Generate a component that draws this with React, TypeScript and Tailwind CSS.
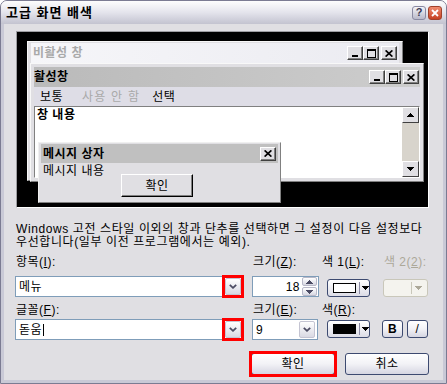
import type { ReactNode } from 'react'

type CapKind = 'min' | 'max' | 'close'

function CapGlyph({ kind }: { kind: CapKind }) {
  if (kind === 'min')
    return (
      <svg width="8" height="8" viewBox="0 0 8 8" shapeRendering="crispEdges">
        <rect x="1" y="6" width="6" height="2" fill="#000" />
      </svg>
    )
  if (kind === 'max')
    return (
      <svg width="9" height="9" viewBox="0 0 9 9" shapeRendering="crispEdges">
        <path d="M0 0h9v9H0z M1 2v6h7V2z" fill="#000" fillRule="evenodd" />
      </svg>
    )
  return (
    <svg width="8" height="7" viewBox="0 0 8 7">
      <path d="M0.6 0.4L7.4 6.6M7.4 0.4L0.6 6.6" stroke="#000" strokeWidth="1.7" />
    </svg>
  )
}

function CapBtn({ kind }: { kind: CapKind }) {
  return (
    <span className="flex h-[14px] w-[16px] items-center justify-center border border-t-white border-l-white border-r-[#404040] border-b-[#404040] bg-[#e0dfe3] shadow-[inset_-1px_-1px_0_#808080]">
      <CapGlyph kind={kind} />
    </span>
  )
}

function CapBtns() {
  return (
    <span className="flex items-center">
      <CapBtn kind="min" />
      <CapBtn kind="max" />
      <span className="ml-[2px]">
        <CapBtn kind="close" />
      </span>
    </span>
  )
}

function Arrow({ up, color = '#000' }: { up?: boolean; color?: string }) {
  return (
    <svg width="7" height="4" viewBox="0 0 7 4" shapeRendering="crispEdges">
      <path d={up ? 'M3.5 0L7 4H0z' : 'M0 0h7L3.5 4z'} fill={color} />
    </svg>
  )
}

function Chevron() {
  return (
    <svg width="8" height="5" viewBox="0 0 8 5">
      <path d="M0.8 0.8L4 3.8L7.2 0.8" fill="none" stroke="#4b4b63" strokeWidth="1.8" />
    </svg>
  )
}

function DropBtn() {
  return (
    <span className="flex h-[17px] w-[16px] items-center justify-center rounded-[2px] border border-[#c4c4d2] bg-linear-to-b from-white to-[#d9d9e3]">
      <Chevron />
    </span>
  )
}

function Combo({ children, className, highlight }: { children: ReactNode; className: string; highlight?: boolean }) {
  return (
    <div className={`flex h-[21px] items-center border border-[#7f9db9] bg-white pr-[2px] ${className}`}>
      <span className="flex flex-1 items-center pl-[3px] leading-[14px]">{children}</span>
      <span className="relative flex">
        <DropBtn />
        {highlight && <span className="pointer-events-none absolute -inset-[3px] border-[3px] border-[#ff0000]" />}
      </span>
    </div>
  )
}

function ColorBtn({ swatch, disabled }: { swatch?: string; disabled?: boolean }) {
  if (disabled)
    return (
      <div className="flex h-[18px] w-[45px] items-center justify-end rounded-[3px] border border-[#c9c7ba] bg-[#f4f3ee] pr-[5px]">
        <span className="mr-[3px] h-[12px] w-px bg-[#c9c7ba]" />
        <Arrow color="#aca899" />
      </div>
    )
  return (
    <div className="flex h-[18px] w-[43px] items-center rounded-[3px] border border-[#3d4a70] bg-linear-to-b from-white to-[#dcdce6] pl-[5px]">
      <span className={`h-[10px] w-[24px] border border-black ${swatch}`} />
      <span className="ml-[3px] h-[12px] w-px bg-[#8d8da6]" />
      <span className="ml-[2px] flex">
        <Arrow />
      </span>
    </div>
  )
}

function XpBtn({ children, className }: { children: ReactNode; className: string }) {
  return (
    <div
      className={`flex items-center justify-center rounded-[3px] border border-[#3d4a70] bg-linear-to-b from-white via-[#f2f2f6] to-[#d6d6e2] ${className}`}
    >
      {children}
    </div>
  )
}

function Label({ children, className = '' }: { children: ReactNode; className?: string }) {
  return <div className={`whitespace-nowrap leading-[12px] ${className}`}>{children}</div>
}

export default function App() {
  return (
    <div className="h-[384px] w-[447px] overflow-hidden bg-white font-[family-name:Liberation_Sans,Noto_Sans_CJK_KR,sans-serif] text-[12px] tracking-[0.5px] text-black">
      <div className="flex h-[384px] flex-col rounded-t-[7px] border border-[#7b7b92] bg-[#e0dfe3]">
        {/* title bar */}
        <div className="flex h-[23px] shrink-0 items-center justify-between rounded-t-[6px] bg-linear-to-b from-[#fdfdfd] via-[#e4e4ec] to-[#c3c3d0] pl-[5px] pr-[4px]">
          <span className="text-[13px] font-bold leading-none tracking-[1px]">고급 화면 배색</span>
          <span className="flex gap-[2px]">
            <span className="flex h-[14px] w-[14px] items-center justify-center rounded-[3px] border border-[#8a8aa2] bg-linear-to-b from-[#f4f4f8] to-[#b9b9ca] text-[11px] font-bold leading-none tracking-normal text-[#3a3a55]">
              ?
            </span>
            <span className="flex h-[14px] w-[14px] items-center justify-center rounded-[3px] border border-[#a0402a] bg-linear-to-b from-[#f08a6e] to-[#c5401f]">
              <svg width="8" height="8" viewBox="0 0 8 8">
                <path d="M1 1L7 7M7 1L1 7" stroke="#fff" strokeWidth="1.8" />
              </svg>
            </span>
          </span>
        </div>

        {/* body */}
        <div className="flex flex-1 flex-col border-x-[3px] border-b-[3px] border-[#c9c9d6] pl-[12px] pr-[14px]">
          {/* preview */}
          <div className="relative mt-[7px] h-[177px] shrink-0 border border-t-[#9d9da1] border-l-[#9d9da1] border-r-white border-b-white bg-black">
            {/* inactive window */}
            <div className="absolute left-[10px] top-[9px] h-[140px] w-[376px] border border-t-[#f8f8f8] border-l-[#f8f8f8] border-r-[#808080] border-b-[#808080] bg-[#e0dfe3] px-[3px] pt-[1px]">
              <div className="flex h-[20px] items-center justify-between bg-linear-to-r from-[#f6f6f9] to-[#ebebf1] pl-[2px] pr-[2px]">
                <span className="font-bold leading-none text-[#a9a9a9]">비활성 창</span>
                <CapBtns />
              </div>
            </div>

            {/* active window */}
            <div className="absolute left-[13px] top-[31px] flex h-[119px] w-[394px] flex-col border border-t-[#f8f8f8] border-l-[#f8f8f8] border-r-[#808080] border-b-[#808080] bg-[#e0dfe3] p-[3px]">
              <div className="flex h-[20px] shrink-0 items-center justify-between bg-linear-to-r from-[#bababa] to-[#cdcdcd] pr-[1px]">
                <span className="font-bold leading-none">활성창</span>
                <CapBtns />
              </div>
              <div className="flex h-[19px] shrink-0 items-center bg-[#dedde6] leading-none">
                <span className="ml-[6px]">보통</span>
                <span className="ml-[19px] tracking-[1.2px] text-[#a9a9a9]">사용 안 함</span>
                <span className="ml-[12px]">선택</span>
              </div>
              <div className="flex flex-1 border border-t-[#808080] border-l-[#808080] border-r-white border-b-white bg-white">
                <div className="flex-1 pl-[2px] pt-[2px] font-bold leading-[12px]">창 내용</div>
                <div className="flex w-[17px] flex-col bg-[#d8d4cc]">
                  <span className="flex h-[16px] items-center justify-center border border-t-white border-l-white border-r-[#404040] border-b-[#404040] bg-[#e0dfe3]">
                    <Arrow up />
                  </span>
                  <span className="flex-1" />
                  <span className="flex h-[16px] items-center justify-center border border-t-white border-l-white border-r-[#404040] border-b-[#404040] bg-[#e0dfe3]">
                    <Arrow />
                  </span>
                </div>
              </div>
            </div>

            {/* message box */}
            <div className="absolute left-[21px] top-[110px] h-[61px] w-[243px] border border-t-[#f0f0f0] border-l-[#f0f0f0] border-r-[#808080] border-b-[#808080] bg-[#e0dfe3] px-[2px] pt-[1px]">
              <div className="flex h-[19px] items-center justify-between bg-[#c0c0c0] pl-[2px] pr-[2px]">
                <span className="font-bold leading-none">메시지 상자</span>
                <CapBtn kind="close" />
              </div>
              <div className="flex">
                <span className="w-[80px] pl-[2px] pt-[2px] leading-[12px]">메시지 내용</span>
                <span className="mt-[11px] flex h-[23px] w-[72px] items-center justify-center border border-t-white border-l-white border-r-black border-b-black bg-[#e0dfe3] leading-none shadow-[inset_-1px_-1px_0_#808080]">
                  확인
                </span>
              </div>
            </div>
          </div>

          {/* description */}
          <div className="mt-[15px] whitespace-nowrap leading-[13px] tracking-[0.6px]">
            Windows 고전 스타일 이외의 창과 단추를 선택하면 그 설정이 다음 설정보다
            <br />
            우선합니다(일부 이전 프로그램에서는 예외).
          </div>

          {/* row 1 */}
          <div className="mt-[7px] grid grid-cols-[236px_70px_60px_47px]">
            <Label>
              항목(<span className="underline">I</span>):
            </Label>
            <Label className="pl-[1px]">
              크기(<span className="underline">Z</span>):
            </Label>
            <Label>
              색 1(<span className="underline">L</span>):
            </Label>
            <Label className="pl-[2px] text-[#aca899]">
              색 2(<span className="underline">2</span>):
            </Label>
          </div>
          <div className="mt-[8px] grid grid-cols-[236px_70px_60px_47px] items-start">
            <Combo className="-ml-px w-[229px]" highlight>
              메뉴
            </Combo>
            <div className="flex h-[21px] w-[67px] items-center border border-[#7f9db9] bg-white pr-[1px]">
              <span className="flex-1 pr-[2px] text-right leading-none">18</span>
              <span className="flex h-[19px] w-[15px] flex-col gap-px">
                <span className="flex flex-1 items-center justify-center rounded-[2px] border border-[#b8b8c8] bg-linear-to-b from-white to-[#d8d8e2]">
                  <Arrow up color="#4b4b63" />
                </span>
                <span className="flex flex-1 items-center justify-center rounded-[2px] border border-[#b8b8c8] bg-linear-to-b from-white to-[#d8d8e2]">
                  <Arrow color="#4b4b63" />
                </span>
              </span>
            </div>
            <div className="ml-[5px] mt-[3px]">
              <ColorBtn swatch="bg-white" />
            </div>
            <div className="ml-px mt-[3px]">
              <ColorBtn disabled />
            </div>
          </div>

          {/* row 2 */}
          <div className="mt-[7px] grid grid-cols-[236px_70px_60px_47px]">
            <Label>
              글꼴(<span className="underline">F</span>):
            </Label>
            <Label className="pl-[1px]">
              크기(<span className="underline">E</span>):
            </Label>
            <Label>
              색(<span className="underline">R</span>):
            </Label>
            <span />
          </div>
          <div className="mt-[3px] grid grid-cols-[236px_70px_60px_47px] items-start">
            <Combo className="-ml-px w-[229px]" highlight>
              돋움<span className="ml-px inline-block h-[12px] w-px bg-black" />
            </Combo>
            <Combo className="w-[66px]">9</Combo>
            <div className="ml-[5px] mt-px">
              <ColorBtn swatch="bg-black" />
            </div>
            <div className="mt-px flex gap-[4px]">
              <XpBtn className="h-[18px] w-[21px] font-bold leading-none">B</XpBtn>
              <XpBtn className="h-[18px] w-[21px] leading-none">/</XpBtn>
            </div>
          </div>

          {/* buttons */}
          <div className="mt-[13px] flex justify-end gap-[10px]">
            <div className="relative">
              <XpBtn className="h-[22px] w-[84px] leading-none">확인</XpBtn>
              <span className="pointer-events-none absolute -inset-[2px] border-[3px] border-[#ff0000]" />
            </div>
            <XpBtn className="h-[22px] w-[84px] leading-none">취소</XpBtn>
          </div>
        </div>
      </div>
    </div>
  )
}
